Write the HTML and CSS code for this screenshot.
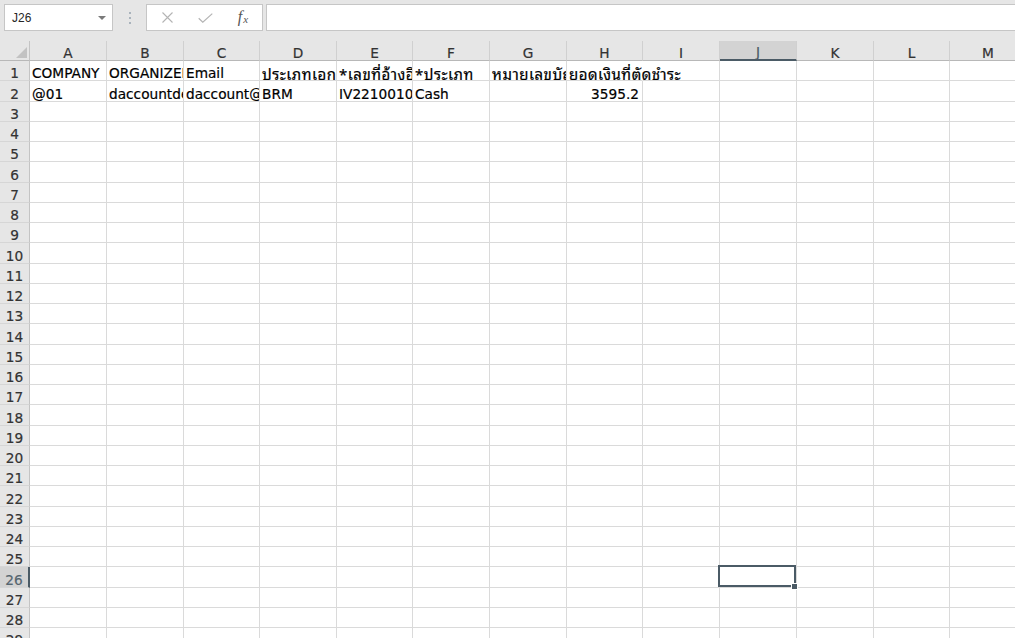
FILE: index.html
```html
<!DOCTYPE html>
<html lang="th">
<head>
<meta charset="utf-8">
<title>Sheet</title>
<link rel="stylesheet" href="styles.css">
</head>
<body>
<div class="toolbar">
  <div class="namebox"><span class="name">J26</span><span class="caret"></span></div>
  <div class="grip"><span class="dot"></span><span class="dot"></span><span class="dot"></span></div>
  <div class="fxbox">
    <span class="slot"><svg width="11" height="11" viewBox="0 0 11 11"><path d="M0.5 0.5 L10.5 10.5 M10.5 0.5 L0.5 10.5" stroke="#b4b4b4" stroke-width="1.1" fill="none"/></svg></span>
    <span class="slot"><svg width="15" height="10" viewBox="0 0 15 10"><path d="M0.7 5.2 L4.8 9.2 L14.3 0.6" stroke="#b4b4b4" stroke-width="1.2" fill="none"/></svg></span>
    <span class="slot"><span class="fx"><span class="fx-f">f</span><span class="fx-x">x</span></span></span>
  </div>
  <div class="formula"></div>
</div>
<div class="sheet">
  <div class="corner"><span class="tri"></span></div>
  <div class="ch">A</div><div class="ch">B</div><div class="ch">C</div><div class="ch">D</div><div class="ch">E</div><div class="ch">F</div><div class="ch">G</div><div class="ch">H</div><div class="ch">I</div><div class="ch sel">J</div><div class="ch">K</div><div class="ch">L</div><div class="ch">M</div>

  <div class="rh">1</div><div class="c">COMPANY</div><div class="c">ORGANIZER</div><div class="c">Email</div><div class="c th">ประเภทเอกสาร</div><div class="c th">*เลขที่อ้างอิง</div><div class="c th">*ประเภท</div><div class="c th">หมายเลขบัญชี</div><div class="c th spill">ยอดเงินที่ตัดชำระ</div><div class="c"></div><div class="c"></div><div class="c"></div><div class="c"></div><div class="c"></div>
  <div class="rh">2</div><div class="c">@01</div><div class="c">daccountdemo</div><div class="c">daccount@demo.com</div><div class="c">BRM</div><div class="c">IV22100100001</div><div class="c">Cash</div><div class="c"></div><div class="c num">3595.2</div><div class="c"></div><div class="c"></div><div class="c"></div><div class="c"></div><div class="c"></div>
  <div class="rh">3</div><div class="c"></div><div class="c"></div><div class="c"></div><div class="c"></div><div class="c"></div><div class="c"></div><div class="c"></div><div class="c"></div><div class="c"></div><div class="c"></div><div class="c"></div><div class="c"></div><div class="c"></div>
  <div class="rh">4</div><div class="c"></div><div class="c"></div><div class="c"></div><div class="c"></div><div class="c"></div><div class="c"></div><div class="c"></div><div class="c"></div><div class="c"></div><div class="c"></div><div class="c"></div><div class="c"></div><div class="c"></div>
  <div class="rh">5</div><div class="c"></div><div class="c"></div><div class="c"></div><div class="c"></div><div class="c"></div><div class="c"></div><div class="c"></div><div class="c"></div><div class="c"></div><div class="c"></div><div class="c"></div><div class="c"></div><div class="c"></div>
  <div class="rh">6</div><div class="c"></div><div class="c"></div><div class="c"></div><div class="c"></div><div class="c"></div><div class="c"></div><div class="c"></div><div class="c"></div><div class="c"></div><div class="c"></div><div class="c"></div><div class="c"></div><div class="c"></div>
  <div class="rh">7</div><div class="c"></div><div class="c"></div><div class="c"></div><div class="c"></div><div class="c"></div><div class="c"></div><div class="c"></div><div class="c"></div><div class="c"></div><div class="c"></div><div class="c"></div><div class="c"></div><div class="c"></div>
  <div class="rh">8</div><div class="c"></div><div class="c"></div><div class="c"></div><div class="c"></div><div class="c"></div><div class="c"></div><div class="c"></div><div class="c"></div><div class="c"></div><div class="c"></div><div class="c"></div><div class="c"></div><div class="c"></div>
  <div class="rh">9</div><div class="c"></div><div class="c"></div><div class="c"></div><div class="c"></div><div class="c"></div><div class="c"></div><div class="c"></div><div class="c"></div><div class="c"></div><div class="c"></div><div class="c"></div><div class="c"></div><div class="c"></div>
  <div class="rh">10</div><div class="c"></div><div class="c"></div><div class="c"></div><div class="c"></div><div class="c"></div><div class="c"></div><div class="c"></div><div class="c"></div><div class="c"></div><div class="c"></div><div class="c"></div><div class="c"></div><div class="c"></div>
  <div class="rh">11</div><div class="c"></div><div class="c"></div><div class="c"></div><div class="c"></div><div class="c"></div><div class="c"></div><div class="c"></div><div class="c"></div><div class="c"></div><div class="c"></div><div class="c"></div><div class="c"></div><div class="c"></div>
  <div class="rh">12</div><div class="c"></div><div class="c"></div><div class="c"></div><div class="c"></div><div class="c"></div><div class="c"></div><div class="c"></div><div class="c"></div><div class="c"></div><div class="c"></div><div class="c"></div><div class="c"></div><div class="c"></div>
  <div class="rh">13</div><div class="c"></div><div class="c"></div><div class="c"></div><div class="c"></div><div class="c"></div><div class="c"></div><div class="c"></div><div class="c"></div><div class="c"></div><div class="c"></div><div class="c"></div><div class="c"></div><div class="c"></div>
  <div class="rh">14</div><div class="c"></div><div class="c"></div><div class="c"></div><div class="c"></div><div class="c"></div><div class="c"></div><div class="c"></div><div class="c"></div><div class="c"></div><div class="c"></div><div class="c"></div><div class="c"></div><div class="c"></div>
  <div class="rh">15</div><div class="c"></div><div class="c"></div><div class="c"></div><div class="c"></div><div class="c"></div><div class="c"></div><div class="c"></div><div class="c"></div><div class="c"></div><div class="c"></div><div class="c"></div><div class="c"></div><div class="c"></div>
  <div class="rh">16</div><div class="c"></div><div class="c"></div><div class="c"></div><div class="c"></div><div class="c"></div><div class="c"></div><div class="c"></div><div class="c"></div><div class="c"></div><div class="c"></div><div class="c"></div><div class="c"></div><div class="c"></div>
  <div class="rh">17</div><div class="c"></div><div class="c"></div><div class="c"></div><div class="c"></div><div class="c"></div><div class="c"></div><div class="c"></div><div class="c"></div><div class="c"></div><div class="c"></div><div class="c"></div><div class="c"></div><div class="c"></div>
  <div class="rh">18</div><div class="c"></div><div class="c"></div><div class="c"></div><div class="c"></div><div class="c"></div><div class="c"></div><div class="c"></div><div class="c"></div><div class="c"></div><div class="c"></div><div class="c"></div><div class="c"></div><div class="c"></div>
  <div class="rh">19</div><div class="c"></div><div class="c"></div><div class="c"></div><div class="c"></div><div class="c"></div><div class="c"></div><div class="c"></div><div class="c"></div><div class="c"></div><div class="c"></div><div class="c"></div><div class="c"></div><div class="c"></div>
  <div class="rh">20</div><div class="c"></div><div class="c"></div><div class="c"></div><div class="c"></div><div class="c"></div><div class="c"></div><div class="c"></div><div class="c"></div><div class="c"></div><div class="c"></div><div class="c"></div><div class="c"></div><div class="c"></div>
  <div class="rh">21</div><div class="c"></div><div class="c"></div><div class="c"></div><div class="c"></div><div class="c"></div><div class="c"></div><div class="c"></div><div class="c"></div><div class="c"></div><div class="c"></div><div class="c"></div><div class="c"></div><div class="c"></div>
  <div class="rh">22</div><div class="c"></div><div class="c"></div><div class="c"></div><div class="c"></div><div class="c"></div><div class="c"></div><div class="c"></div><div class="c"></div><div class="c"></div><div class="c"></div><div class="c"></div><div class="c"></div><div class="c"></div>
  <div class="rh">23</div><div class="c"></div><div class="c"></div><div class="c"></div><div class="c"></div><div class="c"></div><div class="c"></div><div class="c"></div><div class="c"></div><div class="c"></div><div class="c"></div><div class="c"></div><div class="c"></div><div class="c"></div>
  <div class="rh">24</div><div class="c"></div><div class="c"></div><div class="c"></div><div class="c"></div><div class="c"></div><div class="c"></div><div class="c"></div><div class="c"></div><div class="c"></div><div class="c"></div><div class="c"></div><div class="c"></div><div class="c"></div>
  <div class="rh">25</div><div class="c"></div><div class="c"></div><div class="c"></div><div class="c"></div><div class="c"></div><div class="c"></div><div class="c"></div><div class="c"></div><div class="c"></div><div class="c"></div><div class="c"></div><div class="c"></div><div class="c"></div>
  <div class="rh sel">26</div><div class="c"></div><div class="c"></div><div class="c"></div><div class="c"></div><div class="c"></div><div class="c"></div><div class="c"></div><div class="c"></div><div class="c"></div><div class="c active"></div><div class="c"></div><div class="c"></div><div class="c"></div>
  <div class="rh">27</div><div class="c"></div><div class="c"></div><div class="c"></div><div class="c"></div><div class="c"></div><div class="c"></div><div class="c"></div><div class="c"></div><div class="c"></div><div class="c"></div><div class="c"></div><div class="c"></div><div class="c"></div>
  <div class="rh">28</div><div class="c"></div><div class="c"></div><div class="c"></div><div class="c"></div><div class="c"></div><div class="c"></div><div class="c"></div><div class="c"></div><div class="c"></div><div class="c"></div><div class="c"></div><div class="c"></div><div class="c"></div>
  <div class="rh">29</div><div class="c"></div><div class="c"></div><div class="c"></div><div class="c"></div><div class="c"></div><div class="c"></div><div class="c"></div><div class="c"></div><div class="c"></div><div class="c"></div><div class="c"></div><div class="c"></div><div class="c"></div>
</div>
</body>
</html>
```
FILE: styles.css
```css
html, body {
  margin: 0;
  padding: 0;
  width: 1015px;
  height: 638px;
  overflow: hidden;
  background: #ffffff;
}

.toolbar {
  display: flex;
  align-items: flex-start;
  height: 41px;
  box-sizing: border-box;
  padding: 4px 0 0 4px;
  background: #e6e6e6;
  font-family: "Liberation Sans", Arial, sans-serif;
}

.namebox {
  flex: 0 0 auto;
  width: 109px;
  height: 27px;
  box-sizing: border-box;
  border: 1px solid #c6c6c6;
  background: #ffffff;
  display: flex;
  align-items: center;
  justify-content: space-between;
  padding: 0 6px 0 7px;
}

.name {
  font-size: 12px;
  color: #262626;
}

.caret {
  width: 0;
  height: 0;
  border-left: 4px solid transparent;
  border-right: 4px solid transparent;
  border-top: 4px solid #7a7a7a;
  margin-top: 1px;
}

.grip {
  flex: 0 0 auto;
  width: 3px;
  height: 27px;
  margin: 0 15px;
  display: flex;
  flex-direction: column;
  align-items: center;
  justify-content: center;
  gap: 3px;
}

.dot {
  width: 2px;
  height: 2px;
  background: #a9b3bc;
}

.fxbox {
  flex: 0 0 auto;
  width: 117px;
  height: 27px;
  box-sizing: border-box;
  border: 1px solid #c6c6c6;
  background: #ffffff;
  display: flex;
  align-items: center;
  padding-left: 1px;
}

.slot {
  width: 38px;
  height: 25px;
  display: flex;
  align-items: center;
  justify-content: center;
}

.fx {
  display: block;
  font-family: "Liberation Serif", "Times New Roman", serif;
  font-style: italic;
  color: #555555;
  line-height: 16px;
  white-space: nowrap;
}

.fx-f {
  font-size: 16px;
}

.fx-x {
  font-size: 11px;
  position: relative;
  top: 1px;
  margin-left: 1px;
}

.formula {
  flex: 1 1 auto;
  height: 27px;
  box-sizing: border-box;
  margin-left: 3px;
  border: 1px solid #c6c6c6;
  border-right: 0;
  background: #ffffff;
}

.sheet {
  display: grid;
  grid-template-columns: 30px 77px 77px 76px 77px 76px 77px 77px 76px 77px 77px 77px 76px 77px;
  grid-template-rows: 20px;
  grid-auto-rows: 20.25px;
  background: #ffffff;
  font-family: "DejaVu Sans", "Noto Sans Thai", "Noto Sans", Tahoma, sans-serif;
  font-size: 13.7px;
  line-height: 14px;
  color: #000000;
}

.corner {
  position: relative;
  box-sizing: border-box;
  background: #e6e6e6;
  border-right: 1px solid #c4c4c4;
  border-bottom: 1px solid #b8b8b8;
}

.tri {
  position: absolute;
  right: 2px;
  bottom: 2px;
  width: 11px;
  height: 11px;
  background: #c2c2c2;
  clip-path: polygon(100% 0, 100% 100%, 0 100%);
}

.ch {
  box-sizing: border-box;
  display: flex;
  justify-content: center;
  align-items: flex-end;
  background: #e6e6e6;
  border-right: 1px solid #d0d0d0;
  border-bottom: 1px solid #b8b8b8;
  color: #333333;
  -webkit-text-stroke: 0.2px #333333;
}

.ch.sel {
  background: #d3d3d3;
  border-bottom: 2px solid #4b5b66;
  color: #4b5b66;
  -webkit-text-stroke: 0.2px #4b5b66;
}

.rh {
  box-sizing: border-box;
  display: flex;
  justify-content: center;
  align-items: flex-end;
  background: #e6e6e6;
  border-right: 1px solid #c4c4c4;
  border-bottom: 1px solid #d6d6d6;
  color: #333333;
  -webkit-text-stroke: 0.2px #333333;
}

.rh.sel {
  background: #d3d3d3;
  border-right: 2px solid #4b5b66;
  color: #55656f;
  -webkit-text-stroke: 0.2px #55656f;
}

.c {
  box-sizing: border-box;
  display: flex;
  align-items: flex-end;
  padding: 0 2px;
  border-right: 1px solid #dadada;
  border-bottom: 1px solid #dadada;
  overflow: hidden;
  white-space: nowrap;
  -webkit-text-stroke: 0.2px #000000;
}

.c.th {
  font-family: "Noto Sans Thai Looped", Loma, Garuda, Tahoma, "Noto Sans Thai", "DejaVu Sans", sans-serif;
  font-size: 15px;
  letter-spacing: 0.5px;
}

.c.spill {
  overflow: visible;
  border-right-color: transparent;
}

.c.num {
  justify-content: flex-end;
  padding-right: 3px;
}

.c.active {
  position: relative;
  z-index: 1;
  overflow: visible;
}

.c.active::before {
  content: "";
  position: absolute;
  top: -2px;
  left: -2px;
  right: 0;
  bottom: 0;
  border: 2px solid #4b5b66;
  box-sizing: border-box;
}

.c.active::after {
  content: "";
  position: absolute;
  right: -1px;
  bottom: -2px;
  width: 5px;
  height: 5px;
  background: #4b5b66;
  box-shadow: 0 0 0 1px #ffffff;
}
```
